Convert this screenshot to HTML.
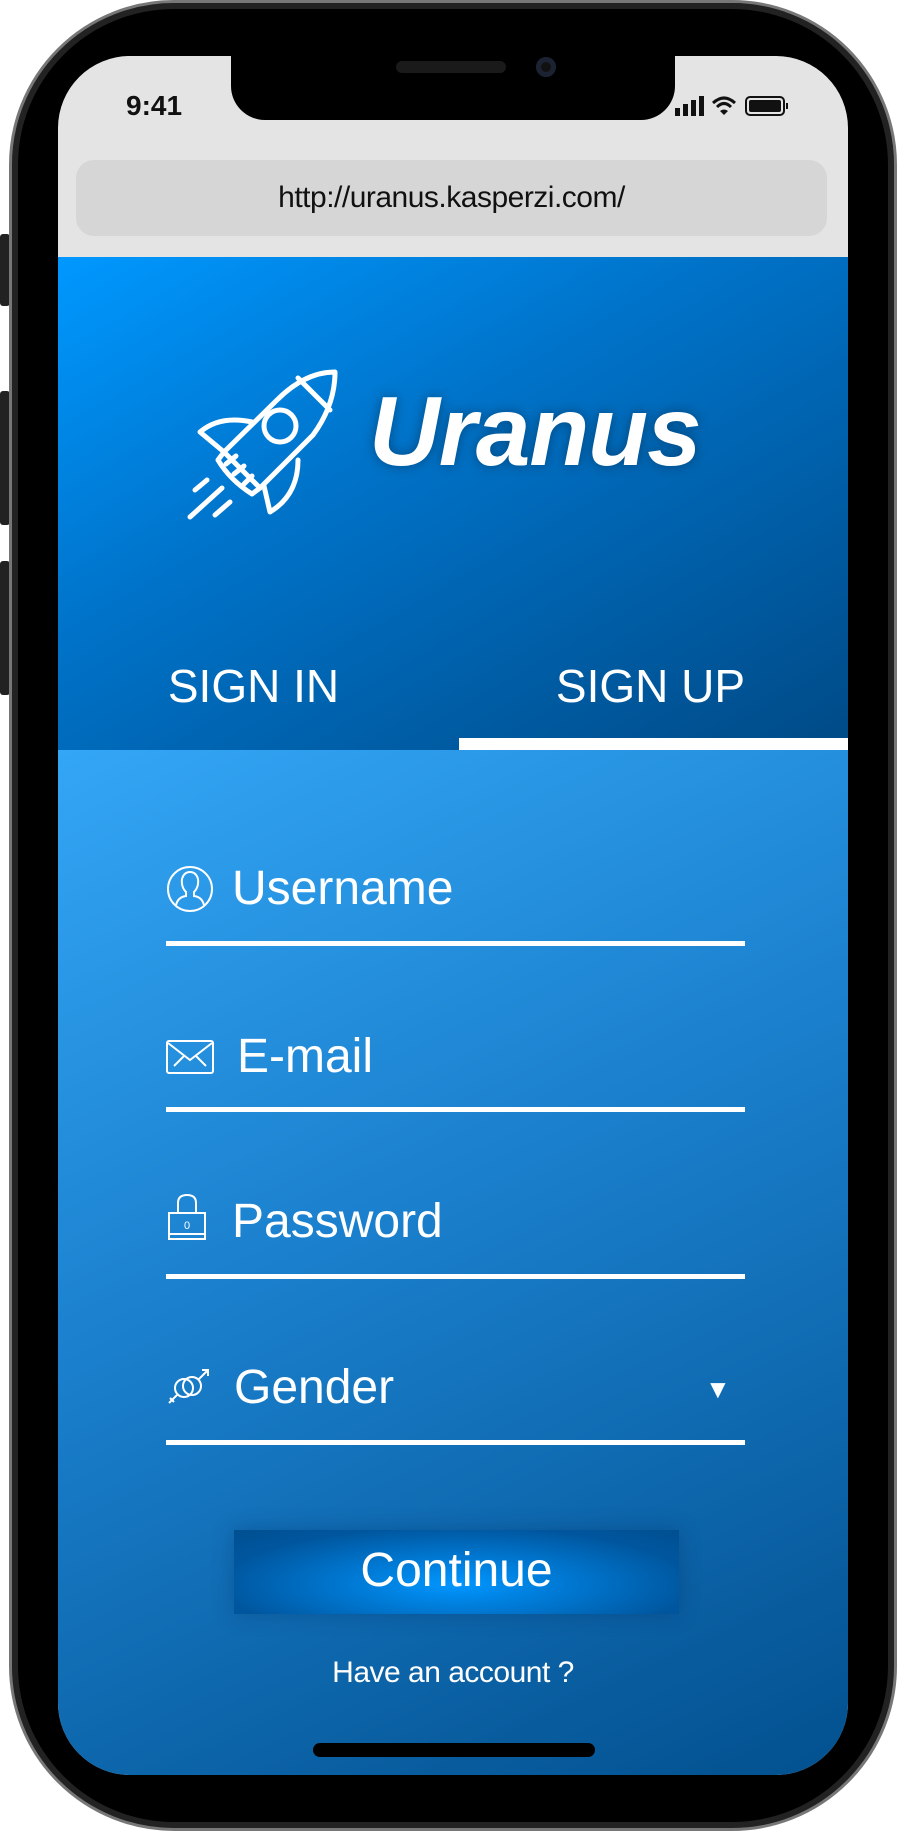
<!DOCTYPE html>
<html><head><meta charset="utf-8"><style>
*{margin:0;padding:0;box-sizing:border-box}
html,body{width:904px;height:1831px;background:#fff;overflow:hidden;font-family:"Liberation Sans",sans-serif}
.body{position:absolute;left:9px;top:0;width:888px;height:1831px;border-radius:165px;background:#000;border:3px solid #777;box-shadow:inset 0 0 0 6px #222,inset 0 0 0 9px #000}
.btn{position:absolute;left:0;width:10px;background:#222;border-radius:3px}
.screen{position:absolute;left:58px;top:56px;width:790px;height:1719px;border-radius:72px;overflow:hidden;background:#e4e4e4}
.notch{position:absolute;left:231px;top:56px;width:444px;height:64px;background:#000;border-radius:0 0 34px 34px}
.url{position:absolute;left:18px;top:104px;width:751px;height:76px;border-radius:18px;background:#d6d6d6;text-align:center;line-height:76px;font-size:30px;color:#111;letter-spacing:-0.5px}
.head{position:absolute;left:0;top:201px;width:790px;height:493px;background:linear-gradient(150deg,#0098ff 0%,#0073c9 40%,#004a86 100%)}
.form{position:absolute;left:0;top:694px;width:790px;height:1030px;background:linear-gradient(155deg,#33a6f5 0%,#1a7fcc 45%,#02508e 100%)}
.tab{position:absolute;top:402px;font-size:46px;color:#fff;width:395px;text-align:center}
.lbl{position:absolute;left:174px;font-size:48px;color:#fff}
.line{position:absolute;left:108px;width:579px;height:5px;background:#fff}
.ico{position:absolute;left:108px}
</style></head><body>
<div class="btn" style="top:234px;height:72px"></div>
<div class="btn" style="top:391px;height:134px"></div>
<div class="btn" style="top:561px;height:134px"></div>
<div class="body"></div>
<div class="screen">
 <div style="position:absolute;left:68px;top:34px;font-size:28px;font-weight:bold;color:#111">9:41</div>
 <svg style="position:absolute;left:617px;top:38px" width="120" height="24" viewBox="0 0 120 24">
  <rect x="0" y="14" width="5" height="8" fill="#111"/><rect x="8" y="10" width="5" height="12" fill="#111"/><rect x="16" y="6" width="5" height="16" fill="#111"/><rect x="24" y="2" width="5" height="20" fill="#111"/>
  <path d="M38 9 Q49 -1 60 9 M42 13 Q49 6 56 13" stroke="#111" stroke-width="3" fill="none"/><path d="M45 17 L49 21 L53 17 Q49 14 45 17Z" fill="#111"/>
  <rect x="71" y="3" width="38" height="18" rx="4" stroke="#111" stroke-width="2" fill="none"/><rect x="74" y="6" width="32" height="12" rx="2" fill="#111"/><rect x="111" y="9" width="2" height="6" fill="#111"/>
 </svg>
 <div class="url">http://uranus.kasperzi.com/</div>
 <div class="head">
  <svg style="position:absolute;left:122px;top:103px" width="180" height="170" viewBox="0 0 180 170" fill="none" stroke="#fff" stroke-width="5" stroke-linejoin="round" stroke-linecap="round">
   <path d="M44 92 L97 40 Q125 12 155 12 Q155 45 133 75 L80 128 Z"/>
   <path d="M118 18 L150 50"/>
   <circle cx="100" cy="66" r="16"/>
   <path d="M72 62 Q40 55 20 72 L44 92"/>
   <path d="M118 100 Q118 135 90 152 L84 126"/>
   <path d="M44 92 L38 100 Q50 120 72 134 L80 128 M46 104 L56 96 M54 114 L64 106 M64 124 L72 116"/>
   <path d="M15 130 L27 120 M10 157 L42 128 M35 155 L50 142"/>
  </svg>
  <div style="position:absolute;left:311px;top:118px;font-size:98px;font-weight:bold;font-style:italic;color:#fff;text-shadow:0 0 12px rgba(0,0,0,.35);letter-spacing:-1px">Uranus</div>
  <div class="tab" style="left:-2px">SIGN IN</div>
  <div class="tab" style="left:395px">SIGN UP</div>
  <div style="position:absolute;left:401px;top:481px;width:389px;height:12px;background:#fff"></div>
 </div>
 <div class="form">
  <svg class="ico" style="top:115px" width="48" height="48" viewBox="0 0 48 48" fill="none" stroke="#fff" stroke-width="2"><circle cx="24" cy="24" r="22"/><path d="M10 40 Q12 32 20 31 L20 27 Q15 22 16 14 Q18 7 24 7 Q30 7 32 14 Q33 22 28 27 L28 31 Q36 32 38 40"/></svg>
  <div class="lbl" style="top:111px">Username</div>
  <div class="line" style="top:191px"></div>
  <svg class="ico" style="top:290px" width="48" height="34" viewBox="0 0 48 34" fill="none" stroke="#fff" stroke-width="2"><rect x="1" y="1" width="46" height="32" rx="2"/><path d="M2 3 L24 20 L46 3 M8 26 L18 16 M40 26 L30 16"/></svg>
  <div class="lbl" style="left:179px;top:279px">E-mail</div>
  <div class="line" style="top:357px"></div>
  <svg class="ico" style="top:443px" width="42" height="48" viewBox="0 0 42 48" fill="none" stroke="#fff" stroke-width="2"><path d="M12 20 V10 Q12 2 21 2 Q30 2 30 10 V20"/><rect x="3" y="20" width="36" height="26"/><path d="M3 41 H39"/><text x="21" y="36" font-size="11" fill="#fff" stroke="none" text-anchor="middle" font-family="Liberation Sans">0</text></svg>
  <div class="lbl" style="top:444px">Password</div>
  <div class="line" style="top:524px"></div>
  <svg class="ico" style="top:616px" width="46" height="42" viewBox="0 0 46 42" fill="none" stroke="#fff" stroke-width="2"><circle cx="18" cy="22" r="9"/><circle cx="26" cy="20" r="9"/><path d="M33 13 L42 4 M36 4 H42 V10 M11 29 L3 37 M4 32 L8 36"/></svg>
  <div class="lbl" style="left:176px;top:610px">Gender</div>
  <div style="position:absolute;left:647px;top:624px;font-size:26px;color:#fff">▼</div>
  <div class="line" style="top:690px"></div>
  <div style="position:absolute;left:176px;top:780px;width:445px;height:84px;background:radial-gradient(ellipse at 50% 65%,#0096ff 0%,#0074cc 40%,#00569e 75%,#004f90 100%);color:#fff;font-size:48px;text-align:center;line-height:82px;box-shadow:0 0 20px rgba(0,40,90,.3)">Continue</div>
  <div style="position:absolute;left:0;width:790px;top:906px;text-align:center;font-size:30px;color:#fff;letter-spacing:-0.5px">Have an account ?</div>
  <div style="position:absolute;left:255px;top:993px;width:282px;height:14px;border-radius:7px;background:#000"></div>
 </div>
</div>
<div class="notch"></div>
<div style="position:absolute;left:396px;top:61px;width:110px;height:12px;border-radius:6px;background:#1a1a1a"></div>
<div style="position:absolute;left:536px;top:57px;width:20px;height:20px;border-radius:50%;background:#111;box-shadow:inset 0 0 0 5px #1b2333"></div>
</body></html>
